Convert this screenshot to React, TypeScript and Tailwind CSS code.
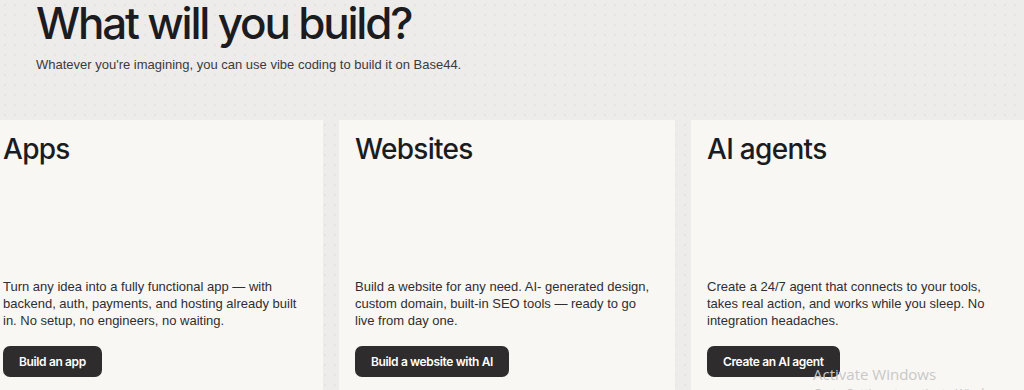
import React from 'react';

interface Card {
  title: string;
  text: string;
  cta: string;
}

const cards: Card[] = [
  {
    title: 'Apps',
    text: 'Turn any idea into a fully functional app — with backend, auth, payments, and hosting already built in. No setup, no engineers, no waiting.',
    cta: 'Build an app',
  },
  {
    title: 'Websites',
    text: 'Build a website for any need. AI- generated design, custom domain, built-in SEO tools — ready to go live from day one.',
    cta: 'Build a website with AI',
  },
  {
    title: 'AI agents',
    text: 'Create a 24/7 agent that connects to your tools, takes real action, and works while you sleep. No integration headaches.',
    cta: 'Create an AI agent',
  },
];

const App: React.FC = () => {
  return (
    <div className="relative h-[390px] w-[1024px] overflow-hidden bg-[#edecea] bg-[radial-gradient(#e5e4e1_1px,transparent_1px)] bg-[size:10px_10px] font-['Inter',sans-serif] text-[#1c1b1f]">
      {/* Heading */}
      <div className="pl-9">
        <h1 className="text-[44px] font-medium leading-[46px] tracking-[-0.05em]">What will you build?</h1>
        <p className="mt-[9px] font-['Liberation_Sans',sans-serif] text-[13px] leading-5 text-[#3b3a3d]">
          Whatever you're imagining, you can use vibe coding to build it on Base44.
        </p>
      </div>

      {/* Cards */}
      <div className="absolute left-[-13px] top-[120px] flex gap-4">
        {cards.map((card) => (
          <div key={card.title} className="flex h-[290px] w-[336px] flex-col bg-[#f8f7f4] px-4 pt-[11px]">
            <h2 className="text-[28px] font-medium leading-[36px] tracking-[-0.025em]">{card.title}</h2>
            <p className="mt-[111px] pr-2 font-['Liberation_Sans',sans-serif] text-[13px] leading-[17px] text-[#2f2e31]">
              {card.text}
            </p>
            <div className="mt-[17px]">
              <button className="h-[31px] rounded-[7px] bg-[#2e2c2c] px-4 text-[12px] font-semibold tracking-[-0.03em] text-white">
                {card.cta}
              </button>
            </div>
          </div>
        ))}
      </div>

      {/* OS watermark */}
      <div className="absolute left-[813px] top-[364px] font-['Open_Sans',sans-serif] text-[15px] leading-5 text-[#c9c8c6]">
        <div>Activate Windows</div>
        <div className="text-[12px]">Go to Settings to activate Windows.</div>
      </div>
    </div>
  );
};

export default App;
